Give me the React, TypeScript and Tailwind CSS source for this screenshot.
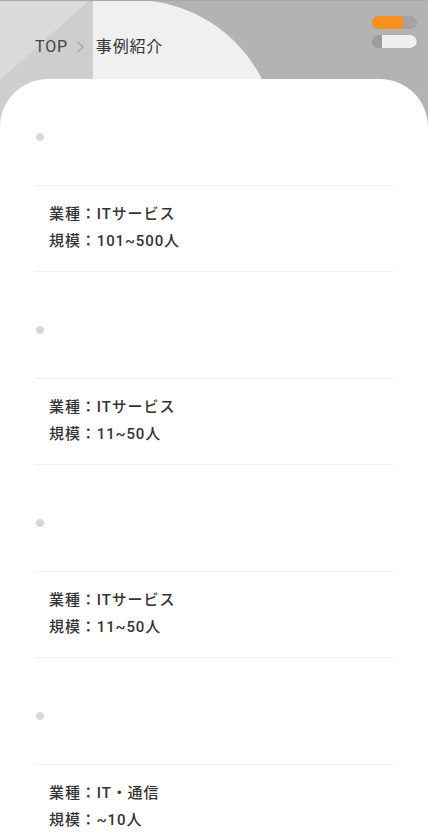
import React from "react";

const items = [
  { industry: "ITサービス", scale: "101~500人" },
  { industry: "ITサービス", scale: "11~50人" },
  { industry: "ITサービス", scale: "11~50人" },
  { industry: "IT・通信", scale: "~10人" },
];

export default function App() {
  return (
    <div
      className="relative min-h-[834px] w-full overflow-hidden bg-white text-[#333333]"
      style={{ fontFamily: "Roboto, 'Noto Sans CJK JP', sans-serif" }}
    >
      <svg
        className="absolute left-0 top-0 z-0"
        width="428"
        height="150"
        viewBox="0 0 428 150"
      >
        <rect x="0" y="0" width="428" height="150" fill="#b3b3b3" />
        <rect x="0" y="0" width="93" height="150" fill="#cecece" />
        <polygon points="0,0 90,0 0,80" fill="#dadada" />
        <path d="M93 0 H140 A145 145 0 0 1 262 79 V150 H93 Z" fill="#f0f0f0" />
        <rect x="0" y="0" width="428" height="1" fill="#a9a9a9" />
      </svg>

      <div className="absolute right-[11px] top-[16px] z-20 flex flex-col gap-[6px]">
        <div className="flex h-[13px] w-[45px] overflow-hidden rounded-full bg-[#a3a3a3]">
          <div className="h-full w-[31px] bg-[#f7901e]" />
        </div>
        <div className="flex h-[13px] w-[45px] overflow-hidden rounded-full bg-[#9c9c9c]">
          <div className="ml-[10px] h-full flex-1 rounded-r-full bg-[#efefef]" />
        </div>
      </div>

      <header className="relative z-10 h-[79px] pl-[35px] pt-[36px]">
        <nav className="flex items-center text-[16px] leading-[22px] tracking-[0.05em]">
          <span className="text-[#444444]">TOP</span>
          <svg
            className="ml-[8px] mr-[11px]"
            width="9"
            height="12"
            viewBox="0 0 9 12"
            fill="none"
          >
            <path d="M1.5 1 L7 6 L1.5 11" stroke="#acacac" strokeWidth="1.6" />
          </svg>
          <span className="text-[#333333]">事例紹介</span>
        </nav>
      </header>

      <main className="relative z-10 rounded-t-[48px] bg-white px-[35px] pt-[54px]">
        {items.map((item, i) => (
          <article key={i} className={i > 0 ? "mt-[54px]" : ""}>
            <div className="ml-px h-[8px] w-[8px] rounded-full bg-[#d9d9d9]" />
            <div className="mt-[44px] border-y border-[#eeeeee] pb-[16px] pl-[14px] pt-[15px] text-[15px] font-medium leading-[27px] tracking-[0.06em] text-[#333333]">
              <p>業種：{item.industry}</p>
              <p>規模：{item.scale}</p>
            </div>
          </article>
        ))}
      </main>
    </div>
  );
}
